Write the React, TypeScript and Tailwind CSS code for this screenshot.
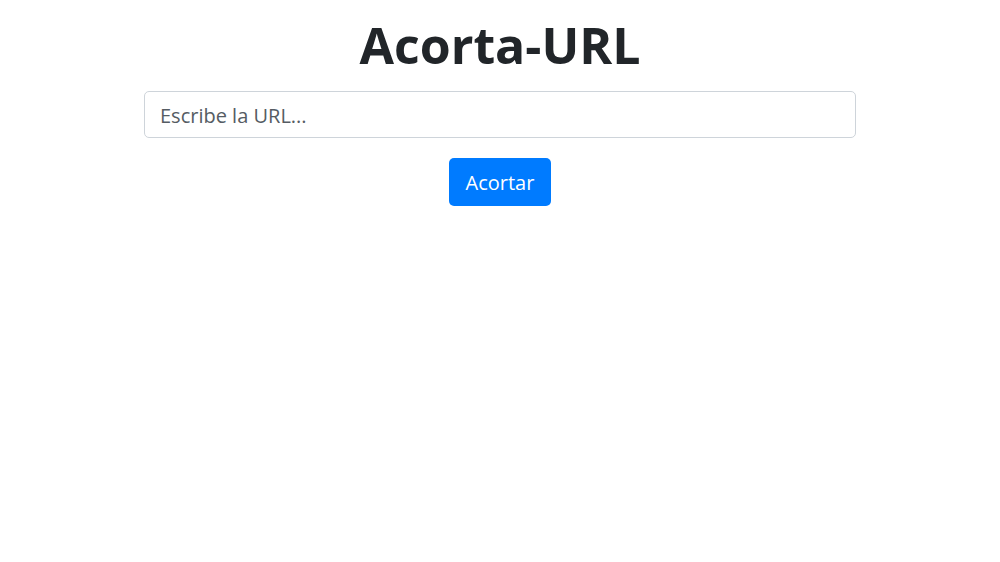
export default function App() {
  return (
    <main className="min-h-screen bg-white font-['Open_Sans',sans-serif] text-[#212529]">
      <div className="w-[712px] mx-auto pt-[15px] flex flex-col items-center">
        <h1 className="text-[50px] font-bold leading-[1.2]">Acorta-URL</h1>
        <input
          type="text"
          placeholder="Escribe la URL..."
          className="mt-[16px] w-full h-[47px] pl-[15px] pr-4 pt-[2px] text-[20px] border border-[#ced4da] rounded-[5px] placeholder:text-[#555c63] outline-none"
        />
        <button className="mt-[20px] h-[48px] w-[102px] pt-[2px] bg-[#007bff] text-white text-[20px] rounded-[5px]">
          Acortar
        </button>
      </div>
    </main>
  );
}
